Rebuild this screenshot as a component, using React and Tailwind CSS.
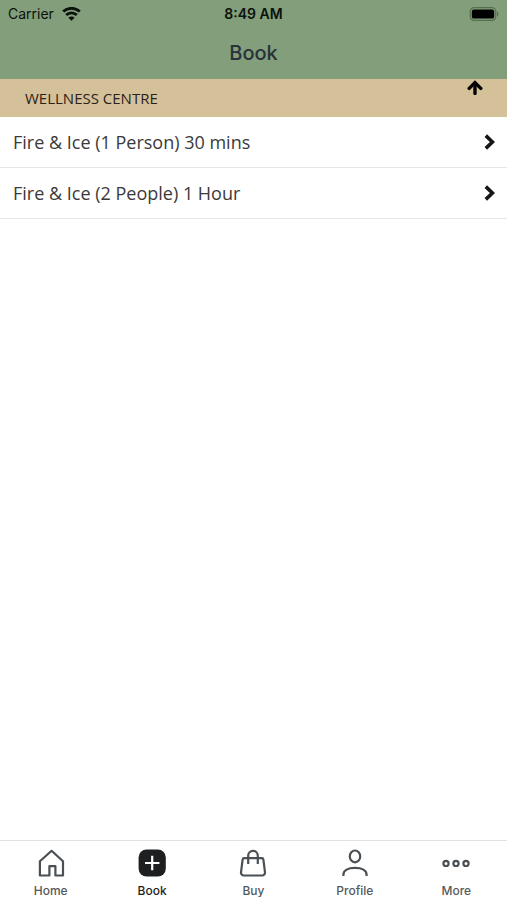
import React, { useState } from 'react';

const services = [
  { id: 1, name: 'Fire & Ice (1 Person) 30 mins' },
  { id: 2, name: 'Fire & Ice (2 People) 1 Hour' },
];

const WifiIcon = () => (
  <svg width="19" height="14" viewBox="0 0 19 14" fill="none" stroke="#0b120c" strokeWidth="2.8" aria-hidden="true">
    <path d="M1.2 4.6a12 12 0 0 1 16.6 0" />
    <path d="M4.2 8.1a7.6 7.6 0 0 1 10.6 0" />
    <path d="M9.5 13.8L6.4 10.8a4.4 4.4 0 0 1 6.2 0z" fill="#0b120c" stroke="none" />
  </svg>
);

const BatteryIcon = () => (
  <svg width="30" height="14" viewBox="0 0 30 14" aria-hidden="true">
    <rect x="1.2" y="0.6" width="25.6" height="12.8" rx="4" fill="none" stroke="#56704f" strokeWidth="1.2" />
    <rect x="2.8" y="2.4" width="22.4" height="9.2" rx="2.2" fill="#000" />
    <path d="M28 4.6c2 .8 2 4 0 4.8z" fill="#56704f" />
  </svg>
);

const ArrowUpIcon = () => (
  <svg width="16" height="16" viewBox="0 0 16 16" fill="none" stroke="#000" strokeWidth="3.4" strokeLinecap="round" aria-hidden="true">
    <path d="M8 14.4V4" />
    <path d="M2.2 9.4L8 3.6l5.8 5.8" />
  </svg>
);

const ChevronIcon = () => (
  <svg width="12" height="16" viewBox="0 0 12 16" fill="none" stroke="#161616" strokeWidth="3.6" aria-hidden="true">
    <path d="M1.8 1.6L8.4 8l-6.6 6.4" />
  </svg>
);

const iconProps = {
  width: 28,
  height: 28,
  viewBox: '0 0 28 28',
  fill: 'none',
  stroke: '#4b5054',
  strokeWidth: 2.2,
  'aria-hidden': true,
};

const HomeIcon = () => (
  <svg {...iconProps} strokeLinejoin="round">
    <path d="M2.9 26.5V12.2L14.6 1.8l11.4 10.4v14.3h-7.6v-9.3h-6v9.3z" />
  </svg>
);

const BookIcon = () => (
  <svg {...iconProps}>
    <rect x="0.6" y="0.4" width="27.2" height="27.2" rx="8" fill="#1d1f21" stroke="none" />
    <path d="M14.2 6.8v14.4M7 14h14.4" stroke="#fff" strokeWidth="2.2" />
  </svg>
);

const BagIcon = () => (
  <svg {...iconProps} strokeLinejoin="round">
    <path d="M5.2 9.2h17.6a1.6 1.6 0 0 1 1.6 1.4l1.6 12.8a2.8 2.8 0 0 1-2.8 3.1H4.8A2.8 2.8 0 0 1 2 23.4l1.6-12.8a1.6 1.6 0 0 1 1.6-1.4z" />
    <path d="M9.2 15V6.6a4.8 4.8 0 0 1 9.6 0V15" />
  </svg>
);

const ProfileIcon = () => (
  <svg {...iconProps}>
    <ellipse cx="14" cy="7.4" rx="5.2" ry="5.9" />
    <path d="M2.4 27v-1.2c0-4.4 4.6-7 11.6-7s11.6 2.6 11.6 7V27" />
  </svg>
);

const MoreIcon = () => (
  <svg {...iconProps}>
    <circle cx="4" cy="14.4" r="2.6" />
    <circle cx="14" cy="14.4" r="2.6" />
    <circle cx="24" cy="14.4" r="2.6" />
  </svg>
);

const tabs = [
  { label: 'Home', Icon: HomeIcon },
  { label: 'Book', Icon: BookIcon, active: true },
  { label: 'Buy', Icon: BagIcon },
  { label: 'Profile', Icon: ProfileIcon },
  { label: 'More', Icon: MoreIcon },
];

const StatusBar = () => (
  <div className="grid h-7 grid-cols-3 items-center px-2 text-sm text-[#0b120c]">
    <div className="flex items-center gap-2">
      <span>Carrier</span>
      <WifiIcon />
    </div>
    <span className="text-center font-semibold">8:49 AM</span>
    <div className="flex justify-end">
      <BatteryIcon />
    </div>
  </div>
);

const ServiceRow = ({ service }) => (
  <li className="border-b border-[#e6e6e6]">
    <button type="button" className="flex h-[50px] w-full items-center justify-between pl-[13px] pr-[11px] text-left">
      <span className="text-lg text-[#3a3a3a]">{service.name}</span>
      <ChevronIcon />
    </button>
  </li>
);

const App = () => {
  const [open, setOpen] = useState(true);

  return (
    <div className="flex min-h-screen flex-col bg-white font-['Open_Sans',sans-serif]">
      <header className="bg-[#829e7a] font-['Inter',sans-serif]">
        <StatusBar />
        <h1 className="flex h-[51px] items-center justify-center pb-0.5 text-xl font-medium text-[#27323a]">Book</h1>
      </header>

      <main className="flex-1">
        <button
          type="button"
          aria-expanded={open}
          onClick={() => setOpen(!open)}
          className="flex h-[38px] w-full items-start justify-between bg-[#d5c199] pl-[25px] pr-6"
        >
          <span className="self-center text-[15px] text-[#2b2118]">WELLNESS CENTRE</span>
          <ArrowUpIcon />
        </button>
        {open && (
          <ul>
            {services.map((service) => (
              <ServiceRow key={service.id} service={service} />
            ))}
          </ul>
        )}
      </main>

      <nav className="grid h-[60px] grid-cols-5 border-t border-[#e2e2e2] font-['Inter',sans-serif]">
        {tabs.map(({ label, Icon, active }) => (
          <a
            key={label}
            href={`#${label.toLowerCase()}`}
            className={`flex flex-col items-center gap-1.5 pt-2 text-xs font-medium ${active ? 'text-[#1d1f21]' : 'text-[#55595c]'}`}
          >
            <Icon />
            <span>{label}</span>
          </a>
        ))}
      </nav>
    </div>
  );
};

export default App;
